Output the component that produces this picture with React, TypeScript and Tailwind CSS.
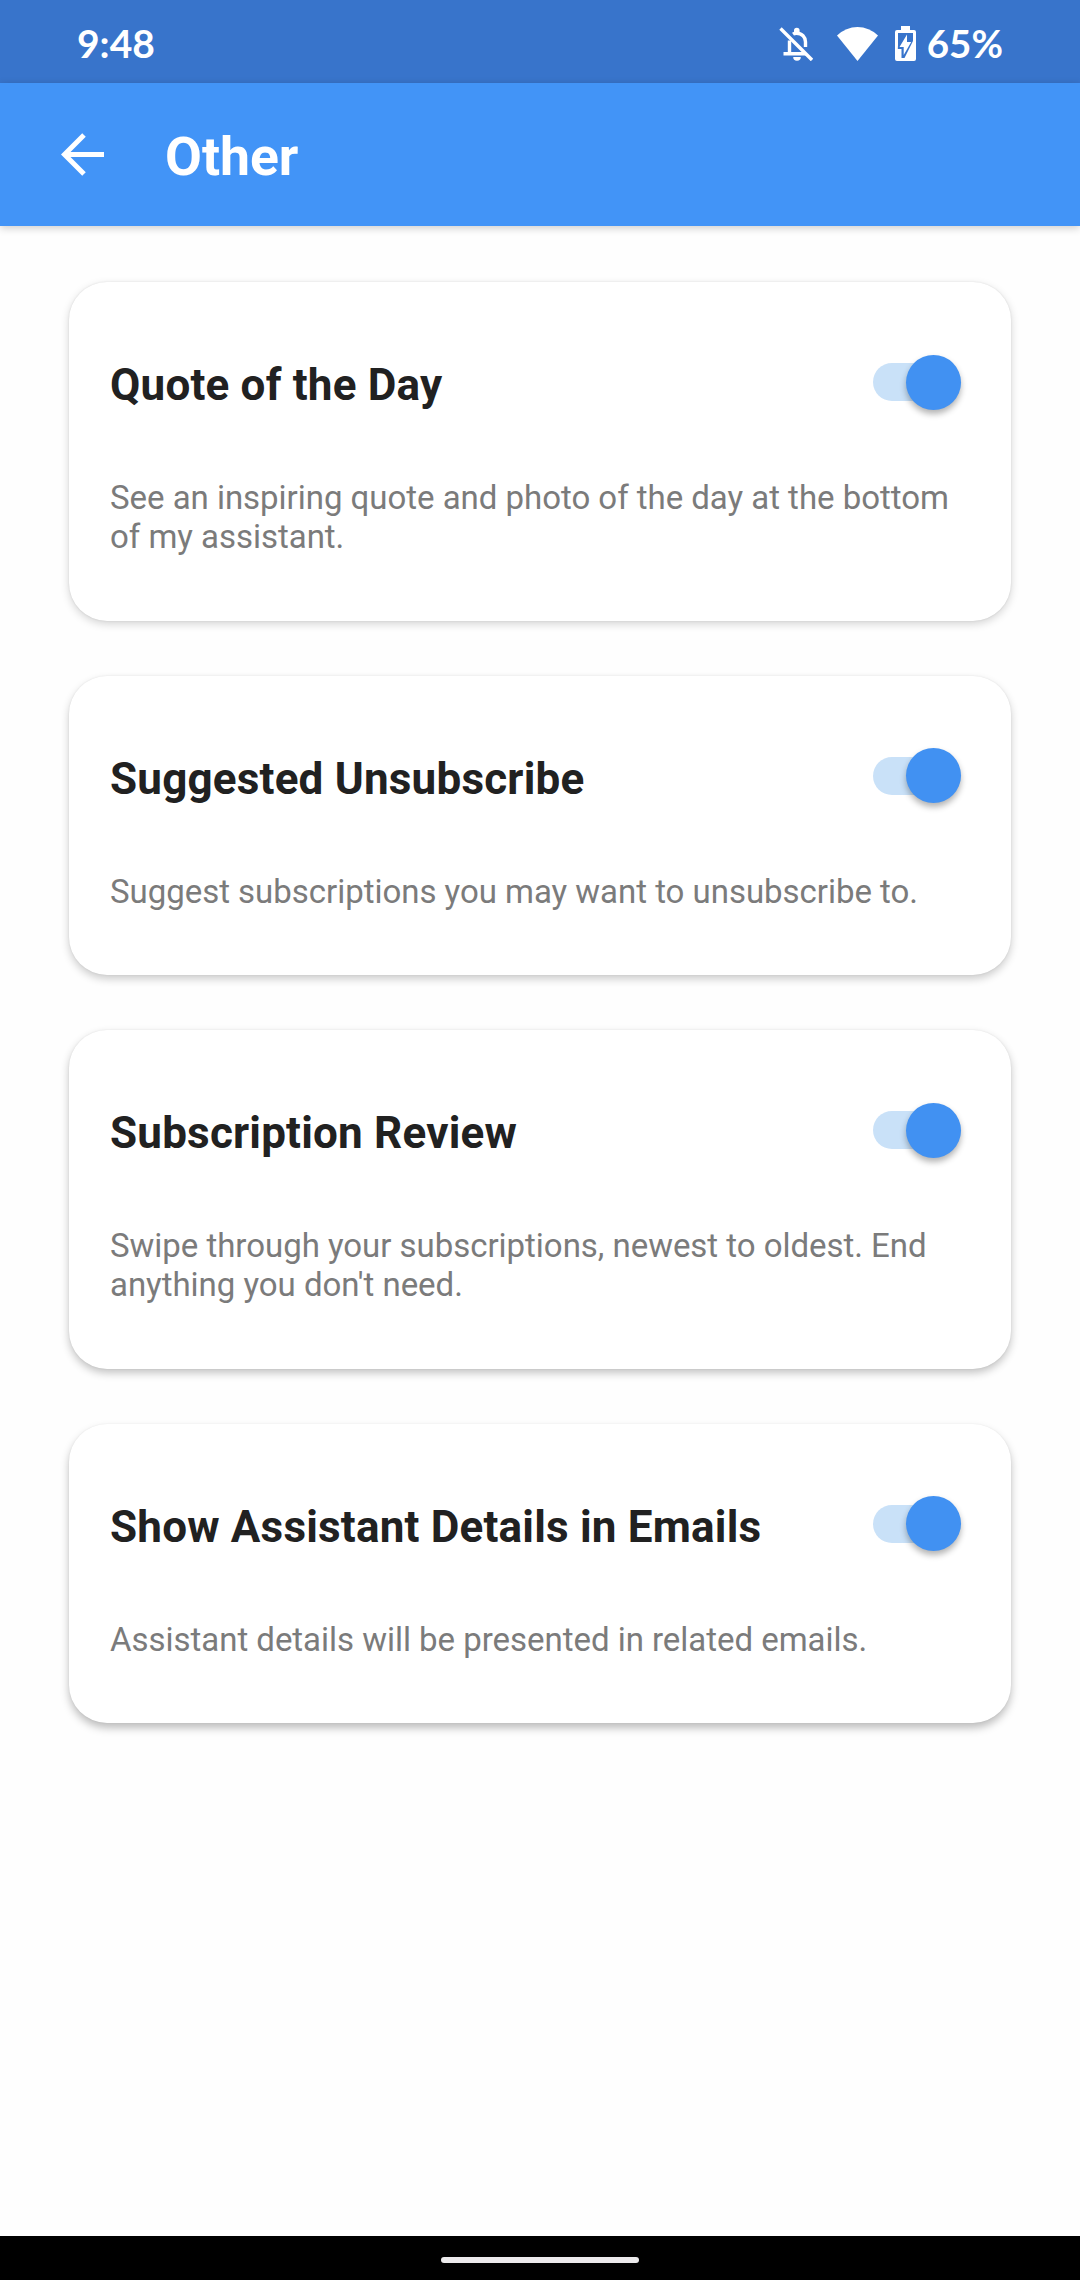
import React, { useState } from "react";
import * as SwitchPrimitive from "@radix-ui/react-switch";

interface Setting {
  id: string;
  title: string;
  description: string;
  shadow: string;
}

// Shadows get a little heavier the further down the screen a card sits
const settings: Setting[] = [
  {
    id: "quote",
    title: "Quote of the Day",
    description: "See an inspiring quote and photo of the day at the bottom of my assistant.",
    shadow: "shadow-[0_3px_8px_rgba(0,0,0,0.17),0_0_2px_rgba(0,0,0,0.1)]",
  },
  {
    id: "unsubscribe",
    title: "Suggested Unsubscribe",
    description: "Suggest subscriptions you may want to unsubscribe to.",
    shadow: "shadow-[0_4px_8px_rgba(0,0,0,0.2),0_0_2px_rgba(0,0,0,0.08)]",
  },
  {
    id: "review",
    title: "Subscription Review",
    description: "Swipe through your subscriptions, newest to oldest. End anything you don't need.",
    shadow: "shadow-[0_4px_8px_rgba(0,0,0,0.24),0_0_2px_rgba(0,0,0,0.07)]",
  },
  {
    id: "details",
    title: "Show Assistant Details in Emails",
    description: "Assistant details will be presented in related emails.",
    shadow: "shadow-[0_5px_9px_rgba(0,0,0,0.26),0_0_2px_rgba(0,0,0,0.06)]",
  },
];

const StatusBar: React.FC = () => (
  <div className="flex h-[83px] shrink-0 items-center justify-between bg-[#3874cb] pt-1 pr-[77px] pl-[77px] font-[Lato] text-[39px] font-bold text-white">
    <span>9:48</span>
    <div className="flex items-center">
      {/* Muted bell */}
      <svg className="mr-[24px] h-[34px] w-[34px]" viewBox="0 0 34 34" fill="none" stroke="currentColor" strokeWidth="3.4">
        <path d="M10.500 27V13.500M14 7.200C15 6.500 16 6.200 17.500 6.200C23 6.200 26.500 10 26.500 15V20M4.500 26.800H27" />
        <path d="M15 3.500A2.800 2.800 0 0 1 20.600 3.500V7H15ZM14.200 30H21.800A3.800 3.800 0 0 1 14.200 30Z" fill="currentColor" stroke="none" />
        <path d="M1.500 1.500L33 33" />
      </svg>
      <svg className="mr-[17px] h-[34px] w-[41px]" viewBox="0 0 41 34" fill="currentColor">
        <path d="M0 8.500Q9 0 20.500 0T41 8.500L20.500 34Z" />
      </svg>
      {/* Charging battery */}
      <svg className="mr-[11px] h-[35px] w-[21px]" viewBox="0 0 21 35">
        <path d="M6 0H15V4H19Q21 4 21 6V33Q21 35 19 35H2Q0 35 0 33V6Q0 4 2 4H6Z" fill="currentColor" />
        <path d="M3 7H18V15L9.500 32H6.500V23H2.800L3 19Z" fill="#3874cb" />
        <path d="M12 8.500V16H16.200L8.700 29V21H4.500Z" fill="currentColor" />
      </svg>
      <span className="text-[38.5px]">65%</span>
    </div>
  </div>
);

const AppBar: React.FC = () => (
  <header className="relative z-10 flex h-[143px] shrink-0 items-center bg-[#4294f7] pl-[61px] text-white shadow-[0_2px_8px_rgba(0,0,0,0.2)]">
    <button aria-label="Back" className="mr-[61px]">
      <svg className="h-[43px] w-[43px]" viewBox="0 0 43 43" fill="none" stroke="currentColor" strokeWidth="5">
        <path d="M23 2L3.500 21.500L23 41M3 21.500H43" />
      </svg>
    </button>
    <h1 className="pt-[5px] text-[53.5px] leading-none font-bold">Other</h1>
  </header>
);

const SettingCard: React.FC<{ setting: Setting }> = ({ setting }) => {
  const [enabled, setEnabled] = useState(true);

  return (
    <section className={`rounded-[38px] bg-white px-[41px] pt-[77px] pb-[64.5px] ${setting.shadow}`}>
      <div className="flex h-[52px] items-center justify-between">
        <h2 className="text-[44px] leading-[52px] font-bold tracking-[0.2px] text-[#212121]">{setting.title}</h2>
        <SwitchPrimitive.Root
          checked={enabled}
          onCheckedChange={setEnabled}
          aria-label={setting.title}
          className="mr-[9px] mb-[6px] flex h-[38px] w-[88px] items-center rounded-full bg-gray-300 data-[state=checked]:justify-end data-[state=checked]:bg-[#c9e1f8]"
        >
          <SwitchPrimitive.Thumb className="h-[55px] w-[55px] shrink-0 rounded-full bg-[#4191f2] shadow-[0_4px_6px_rgba(0,0,0,0.3)]" />
        </SwitchPrimitive.Root>
      </div>
      <p className="mt-[67px] text-[33px] leading-[39px] tracking-[-0.03px] text-[#7b7b7b]">{setting.description}</p>
    </section>
  );
};

export default function App() {
  return (
    <div className="flex h-[2280px] w-[1080px] flex-col bg-[#fefefe] font-[Roboto]">
      <StatusBar />
      <AppBar />
      <main className="flex grow flex-col gap-[55px] px-[69px] pt-[56px]">
        {settings.map((setting) => (
          <SettingCard key={setting.id} setting={setting} />
        ))}
      </main>
      <footer className="flex h-[44px] shrink-0 items-center justify-center bg-black pt-1">
        <div className="h-[6px] w-[198px] rounded-full bg-[#eceaec]" />
      </footer>
    </div>
  );
}
